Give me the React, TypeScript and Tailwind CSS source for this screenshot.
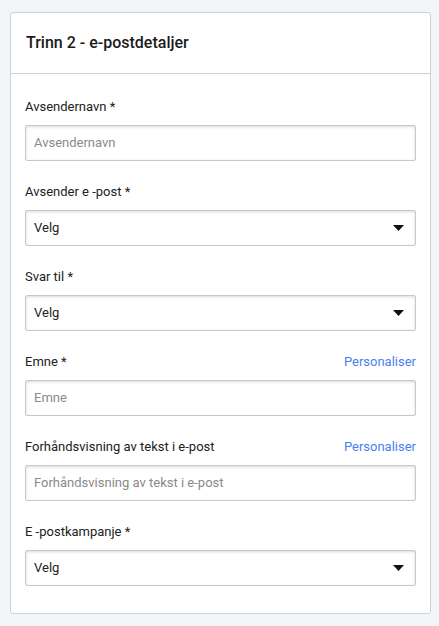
import React from "react";

function Label({ text, link }: { text: string; link?: boolean }) {
  return (
    <div className="flex items-center justify-between h-[20px] mb-[8px]">
      <span className="text-[13px] text-[#222]">{text}</span>
      {link && <span className="text-[13px] text-[#4a7ff0]">Personaliser</span>}
    </div>
  );
}

function TextInput({ placeholder }: { placeholder: string }) {
  return (
    <div className="h-[36px] border border-[#c8c8c8] rounded-[2px] bg-white shadow-[inset_0_1px_3px_rgba(0,0,0,0.15)] flex items-center px-[8px]">
      <span className="text-[13px] text-[#8a8a8a]">{placeholder}</span>
    </div>
  );
}

function Select() {
  return (
    <div className="h-[36px] border border-[#c8c8c8] rounded-[2px] bg-white shadow-[inset_0_1px_3px_rgba(0,0,0,0.15)] flex items-center justify-between pl-[8px] pr-[11px]">
      <span className="text-[13px] text-[#222]">Velg</span>
      <svg width="11" height="6" viewBox="0 0 11 6">
        <polygon points="0,0 11,0 5.5,6" fill="#111" />
      </svg>
    </div>
  );
}

export default function App() {
  return (
    <div className="w-[439px] h-[626px] bg-[#f3f6f9] pt-[12px] font-['Roboto',sans-serif]">
      <div className="ml-[10px] w-[421px] bg-white border border-[#d0d0d0] rounded-[3px]">
        <div className="h-[61px] border-b border-[#d0d0d0] flex items-center px-[15px]">
          <span className="text-[16px] font-medium text-[#1a1a1a]">Trinn 2 - e-postdetaljer</span>
        </div>
        <div className="px-[14px] pt-[23px] pb-[27px] flex flex-col gap-[21px]">
          <div>
            <Label text="Avsendernavn *" />
            <TextInput placeholder="Avsendernavn" />
          </div>
          <div>
            <Label text="Avsender e -post *" />
            <Select />
          </div>
          <div>
            <Label text="Svar til *" />
            <Select />
          </div>
          <div>
            <Label text="Emne *" link />
            <TextInput placeholder="Emne" />
          </div>
          <div>
            <Label text="Forhåndsvisning av tekst i e-post" link />
            <TextInput placeholder="Forhåndsvisning av tekst i e-post" />
          </div>
          <div>
            <Label text="E -postkampanje *" />
            <Select />
          </div>
        </div>
      </div>
    </div>
  );
}
